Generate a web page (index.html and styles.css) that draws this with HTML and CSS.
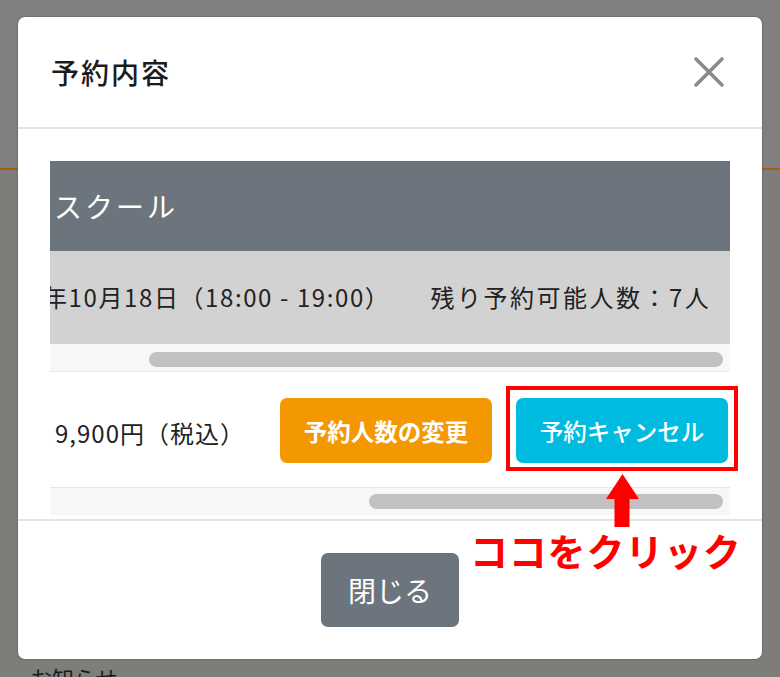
FILE: index.html
```html
<!DOCTYPE html>
<html lang="ja">
<head>
<meta charset="utf-8">
<title>予約内容</title>
<link rel="stylesheet" href="styles.css">
</head>
<body>
<div class="page">
  <div class="page-top"></div>
  <div class="page-body"><p class="page-text">お知らせ</p></div>
</div>

<div class="modal">
  <div class="modal-header">
    <h2 class="modal-title">予約内容</h2>
    <button class="close" aria-label="閉じる">
      <svg width="32" height="32" viewBox="0 0 32 32"><path d="M3 3 L29 29 M29 3 L3 29" stroke="#8a8a8a" stroke-width="3.6" stroke-linecap="round" fill="none"/></svg>
    </button>
  </div>

  <div class="modal-body">
    <div class="scroll">
      <div class="clip">
        <div class="row-dark">スクール</div>
        <div class="row-light">
          <span class="date">年10月18日（18:00 - 19:00）</span>
          <span class="remain">残り予約可能人数：7人</span>
        </div>
      </div>
      <div class="track"><div class="thumb" style="margin-left:99px;width:574px"></div></div>
    </div>
    <div class="scroll scroll-2">
      <div class="row-price">
        <span class="price">9,900円（税込）</span>
        <div class="btns">
          <button class="btn btn-orange">予約人数の変更</button>
          <button class="btn btn-cyan">予約キャンセル</button>
        </div>
      </div>
      <div class="track"><div class="thumb" style="margin-left:319px;width:354px"></div></div>
    </div>
  </div>

  <div class="modal-footer">
    <button class="btn-close">閉じる</button>
  </div>

  <div class="highlight"></div>
  <svg class="arrow" width="33" height="53" viewBox="0 0 33 53"><path d="M16.5 0 L33 25 L23.5 25 L23.5 53 L8.5 53 L8.5 25 L0 25 Z" fill="#ff0000"/></svg>
  <div class="click-label">ココをクリック</div>
</div>
</body>
</html>
```

FILE: styles.css
```css
* { box-sizing: border-box; }
html, body { margin: 0; padding: 0; }
body {
  width: 780px;
  height: 677px;
  overflow: hidden;
  font-family: "Noto Sans CJK JP", "Noto Sans", sans-serif;
  background: #7e7d7a;
  position: relative;
}
.page-top {
  height: 170px;
  background: #808080;
  border-bottom: 2px solid #a2600f;
}
.page-body {
  height: 507px;
  background: #7e7d79;
  padding: 496px 0 0 30px;
}
.page-text {
  margin: 0;
  font-size: 22px;
  line-height: 1;
  color: #1a1a1a;
}

.modal {
  position: absolute;
  left: 18px;
  top: 17px;
  width: 744px;
  height: 642px;
  background: #fff;
  border-radius: 7px;
  box-shadow: 0 0 2px rgba(0,0,0,0.45);
  display: flex;
  flex-direction: column;
}
.modal-header {
  height: 112px;
  flex: none;
  display: flex;
  align-items: center;
  justify-content: space-between;
  padding: 0 37px 0 33px;
  border-bottom: 2px solid #e4e4e4;
}
.modal-title {
  margin: 0;
  font-size: 28px;
  font-weight: 500;
  color: #1c1c1c;
  letter-spacing: 2px;
}
.close {
  border: 0;
  background: none;
  padding: 0;
  width: 32px;
  height: 32px;
  display: block;
}
.close svg { display: block; }

.modal-body {
  height: 390px;
  flex: none;
  overflow: hidden;
  padding: 32px 32px 0 32px;
}
.scroll { width: 680px; }
.clip { overflow: hidden; }
.row-dark {
  height: 90px;
  background: #6c757d;
  color: #fff;
  font-size: 28px;
  letter-spacing: 3px;
  display: flex;
  align-items: center;
  padding-left: 4px;
}
.row-light {
  height: 93px;
  background: #d2d2d2;
  color: #222;
  font-size: 24px;
  display: flex;
  align-items: center;
  white-space: nowrap;
  padding-bottom: 3px;
}
.date { margin-left: -7px; letter-spacing: 1.6px; }
.remain { margin-left: 40px; letter-spacing: 2.5px; }
.track {
  height: 28px;
  background: #f7f7f7;
  border-bottom: 1px solid #e8e8e8;
  padding-top: 8px;
}
.scroll-2 .track {
  height: 28px;
  border-top: 1px solid #e8e8e8;
  border-bottom: 0;
  padding-top: 6px;
}
.thumb {
  height: 15px;
  background: #c1c1c1;
  border-radius: 8px;
}
.row-price {
  height: 115px;
  display: flex;
  align-items: center;
  justify-content: space-between;
  padding: 0 2px 0 5px;
}
.price {
  font-size: 24px;
  letter-spacing: 1px;
  color: #222;
  padding-top: 6px;
}
.btns {
  display: flex;
  gap: 24px;
  padding-top: 2px;
}
.btn {
  width: 212px;
  height: 65px;
  border: 0;
  border-radius: 7px;
  color: #fff;
  font-family: inherit;
  font-size: 23.5px;
  font-weight: 700;
  padding: 0;
}
.btn-orange { background: #f39800; }
.btn-cyan { background: #00bbe0; font-weight: 500; }

.modal-footer {
  flex: 1;
  border-top: 2px solid #e4e4e4;
  display: flex;
  justify-content: center;
  padding-top: 32px;
}
.btn-close {
  width: 138px;
  height: 74px;
  border: 0;
  border-radius: 7px;
  background: #6c757d;
  color: #fff;
  font-family: inherit;
  font-size: 28px;
  padding: 0;
}

.highlight {
  position: absolute;
  left: 488px;
  top: 369px;
  width: 232px;
  height: 85px;
  border: 4px solid #ff0000;
}
.arrow {
  position: absolute;
  left: 588px;
  top: 457px;
}
.click-label {
  position: absolute;
  left: 452px;
  top: 508px;
  font-size: 38px;
  font-weight: 700;
  line-height: 1.3;
  letter-spacing: 0.8px;
  color: #ff0000;
  white-space: nowrap;
}
```
